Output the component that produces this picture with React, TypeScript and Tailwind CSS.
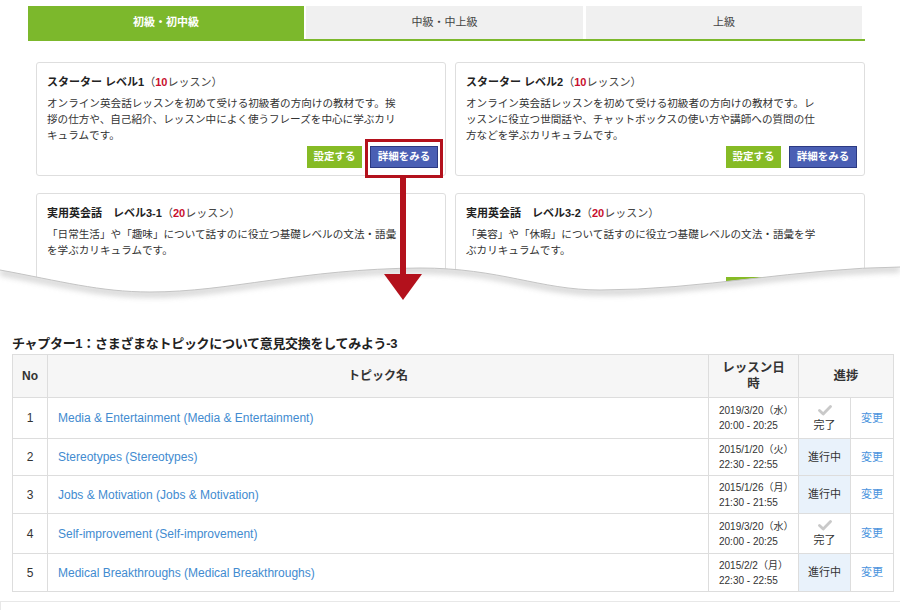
import React from "react";

const cards = [
  {
    title: "スターター レベル1",
    count: "10",
    lines: [
      "オンライン英会話レッスンを初めて受ける初級者の方向けの教材です。挨",
      "拶の仕方や、自己紹介、レッスン中によく使うフレーズを中心に学ぶカリ",
      "キュラムです。",
    ],
  },
  {
    title: "スターター レベル2",
    count: "10",
    lines: [
      "オンライン英会話レッスンを初めて受ける初級者の方向けの教材です。レ",
      "ッスンに役立つ世間話や、チャットボックスの使い方や講師への質問の仕",
      "方などを学ぶカリキュラムです。",
    ],
  },
  {
    title: "実用英会話　レベル3-1",
    count: "20",
    lines: [
      "「日常生活」や「趣味」について話すのに役立つ基礎レベルの文法・語彙",
      "を学ぶカリキュラムです。",
    ],
  },
  {
    title: "実用英会話　レベル3-2",
    count: "20",
    lines: [
      "「美容」や「休暇」について話すのに役立つ基礎レベルの文法・語彙を学",
      "ぶカリキュラムです。",
    ],
  },
];

const rows = [
  { no: 1, topic: "Media & Entertainment (Media & Entertainment)", d1: "2019/3/20（水）", d2: "20:00 - 20:25", done: true, h: "h-[41px]" },
  { no: 2, topic: "Stereotypes (Stereotypes)", d1: "2015/1/20（火）", d2: "22:30 - 22:55", done: false, h: "h-[37px]" },
  { no: 3, topic: "Jobs & Motivation (Jobs & Motivation)", d1: "2015/1/26（月）", d2: "21:30 - 21:55", done: false, h: "h-[38px]" },
  { no: 4, topic: "Self-improvement (Self-improvement)", d1: "2019/3/20（水）", d2: "20:00 - 20:25", done: true, h: "h-[40px]" },
  { no: 5, topic: "Medical Breakthroughs (Medical Breakthroughs)", d1: "2015/2/2（月）", d2: "22:30 - 22:55", done: false, h: "h-[38px]" },
];

function Card({ c }: { c: (typeof cards)[number] }) {
  return (
    <div className="w-[410px] h-[114px] border border-[#dedede] rounded-[3px] bg-white flex flex-col pt-[11px] pl-[10px] pr-[7px] pb-[7px]">
      <div className="text-[11px] leading-[16px] text-[#222] whitespace-nowrap">
        <span className="font-bold">{c.title}</span>
        <span className="text-[#444]">（</span>
        <span className="font-bold text-[#c8102e]">{c.count}</span>
        <span className="text-[#444]">レッスン）</span>
      </div>
      <div className="mt-[5px] text-[10.6px] leading-[16px] text-[#333]">
        {c.lines.map((l, i) => (
          <div key={i} className="whitespace-nowrap">
            {l}
          </div>
        ))}
      </div>
      <div className="mt-auto flex justify-end gap-[8px]">
        <div className="w-[55px] h-[22px] bg-[#86bb25] text-white text-[10.5px] font-bold flex items-center justify-center">
          設定する
        </div>
        <div className="w-[68px] h-[22px] bg-[#4a5fb4] border border-[#2c3a82] text-white text-[10.5px] font-bold flex items-center justify-center">
          詳細をみる
        </div>
      </div>
    </div>
  );
}

function Check() {
  return (
    <svg width="14" height="11" viewBox="0 0 14 11">
      <path d="M1.5 5.5 L5.2 9 L12.5 1.5" fill="none" stroke="#c9c9c9" strokeWidth="2.8" strokeLinecap="round" strokeLinejoin="round" />
    </svg>
  );
}

export default function App() {
  const wave =
    "M0,15 C60,26 100,37 150,37 C230,37 300,14 420,13 C500,13 540,35 600,35 C700,35 800,13 900,12";
  return (
    <div
      className="relative w-[900px] h-[610px] bg-white overflow-hidden"
      style={{ fontFamily: '"Liberation Sans", "Noto Sans CJK JP", sans-serif' }}
    >
      {/* top section */}
      <div className="h-[300px] overflow-hidden pt-[6px] pl-[28px]">
        <div className="w-[837px] border-b-2 border-[#7cb82c] flex gap-[2px]">
          <div className="w-[276px] h-[33px] bg-[#7cb82c] text-white text-[11px] font-bold flex items-center justify-center">
            初級・初中級
          </div>
          <div className="w-[277px] h-[33px] bg-[#f0f0f0] text-[#444] text-[11px] flex items-center justify-center">
            中級・中上級
          </div>
          <div className="ml-[1px] w-[276px] h-[33px] bg-[#f0f0f0] text-[#444] text-[11px] flex items-center justify-center">
            上級
          </div>
        </div>
        <div className="ml-[8px] mt-[21px] grid grid-cols-[410px_410px] gap-x-[9px] gap-y-[17px]">
          {cards.map((c, i) => (
            <Card key={i} c={c} />
          ))}
        </div>
      </div>

      {/* wave overlay */}
      <svg className="absolute left-0 top-[255px]" width="900" height="60" viewBox="0 0 900 60">
        <defs>
          <clipPath id="below">
            <path d={wave + " L900,60 L0,60 Z"} />
          </clipPath>
          <filter id="blur" x="-10%" y="-100%" width="120%" height="300%">
            <feGaussianBlur stdDeviation="3" />
          </filter>
        </defs>
        <path d={wave + " L900,60 L0,60 Z"} fill="#ffffff" />
        <g clipPath="url(#below)">
          <path d={wave} transform="translate(0,2)" fill="none" stroke="#9a9a9a" strokeWidth="5" filter="url(#blur)" opacity="0.55" />
        </g>
        <path d={wave} fill="none" stroke="#c4c4c4" strokeWidth="1" />
      </svg>

      {/* red highlight + arrow */}
      <div className="absolute left-[365px] top-[139px] w-[78px] h-[39px] border-[3px] border-[#b3111c]" />
      <div className="absolute left-[400px] top-[178px] w-[6px] h-[98px] bg-[#b3111c]" />
      <svg className="absolute left-[384px] top-[274px]" width="38" height="26" viewBox="0 0 38 26">
        <polygon points="0,0 38,0 19,26" fill="#b3111c" />
      </svg>

      {/* bottom section */}
      <div className="pt-[36px] px-[12px]">
        <div className="text-[13px] leading-[16px] font-semibold text-[#222] tracking-[-0.3px] whitespace-nowrap">
          チャプター1：さまざまなトピックについて意見交換をしてみよう-3
        </div>
        <table className="mt-[2px] border-collapse table-fixed w-[881px] text-[#333]">
          <colgroup>
            <col className="w-[35px]" />
            <col className="w-[661px]" />
            <col className="w-[90px]" />
            <col className="w-[52px]" />
            <col className="w-[43px]" />
          </colgroup>
          <thead>
            <tr className="h-[43px] bg-[#f6f6f6]">
              <th className="border border-[#dddddd] text-[12px] font-bold text-center">No</th>
              <th className="border border-[#dddddd] text-[12px] font-bold text-center">トピック名</th>
              <th className="border border-[#dddddd] text-[12.5px] font-bold text-center leading-[16px] px-[10px]">
                レッスン日時
              </th>
              <th colSpan={2} className="border border-[#dddddd] text-[12.5px] font-bold text-center">
                進捗
              </th>
            </tr>
          </thead>
          <tbody>
            {rows.map((r) => (
              <tr key={r.no} className={r.h}>
                <td className="border border-[#dddddd] text-[12px] text-center">{r.no}</td>
                <td className="border border-[#dddddd] text-[12px] pl-[10px] text-[#428bd0] whitespace-nowrap">{r.topic}</td>
                <td className="border border-[#dddddd] pl-[10px] text-[10px] leading-[15px] text-[#333] whitespace-nowrap">
                  <div>{r.d1}</div>
                  <div>{r.d2}</div>
                </td>
                {r.done ? (
                  <td className="border border-[#dddddd] text-center">
                    <div className="flex flex-col items-center">
                      <Check />
                      <div className="text-[11px] leading-[14px] mt-[2px]">完了</div>
                    </div>
                  </td>
                ) : (
                  <td className="border border-[#dddddd] bg-[#e9f2fb] text-[11px] text-center">進行中</td>
                )}
                <td className="border border-[#dddddd] text-[11px] text-center text-[#4a93dd]">変更</td>
              </tr>
            ))}
          </tbody>
        </table>
      </div>
      <div className="absolute left-0 top-[601px] w-[900px] h-[10px] border-t border-l border-[#e8e8e8]" />
    </div>
  );
}
